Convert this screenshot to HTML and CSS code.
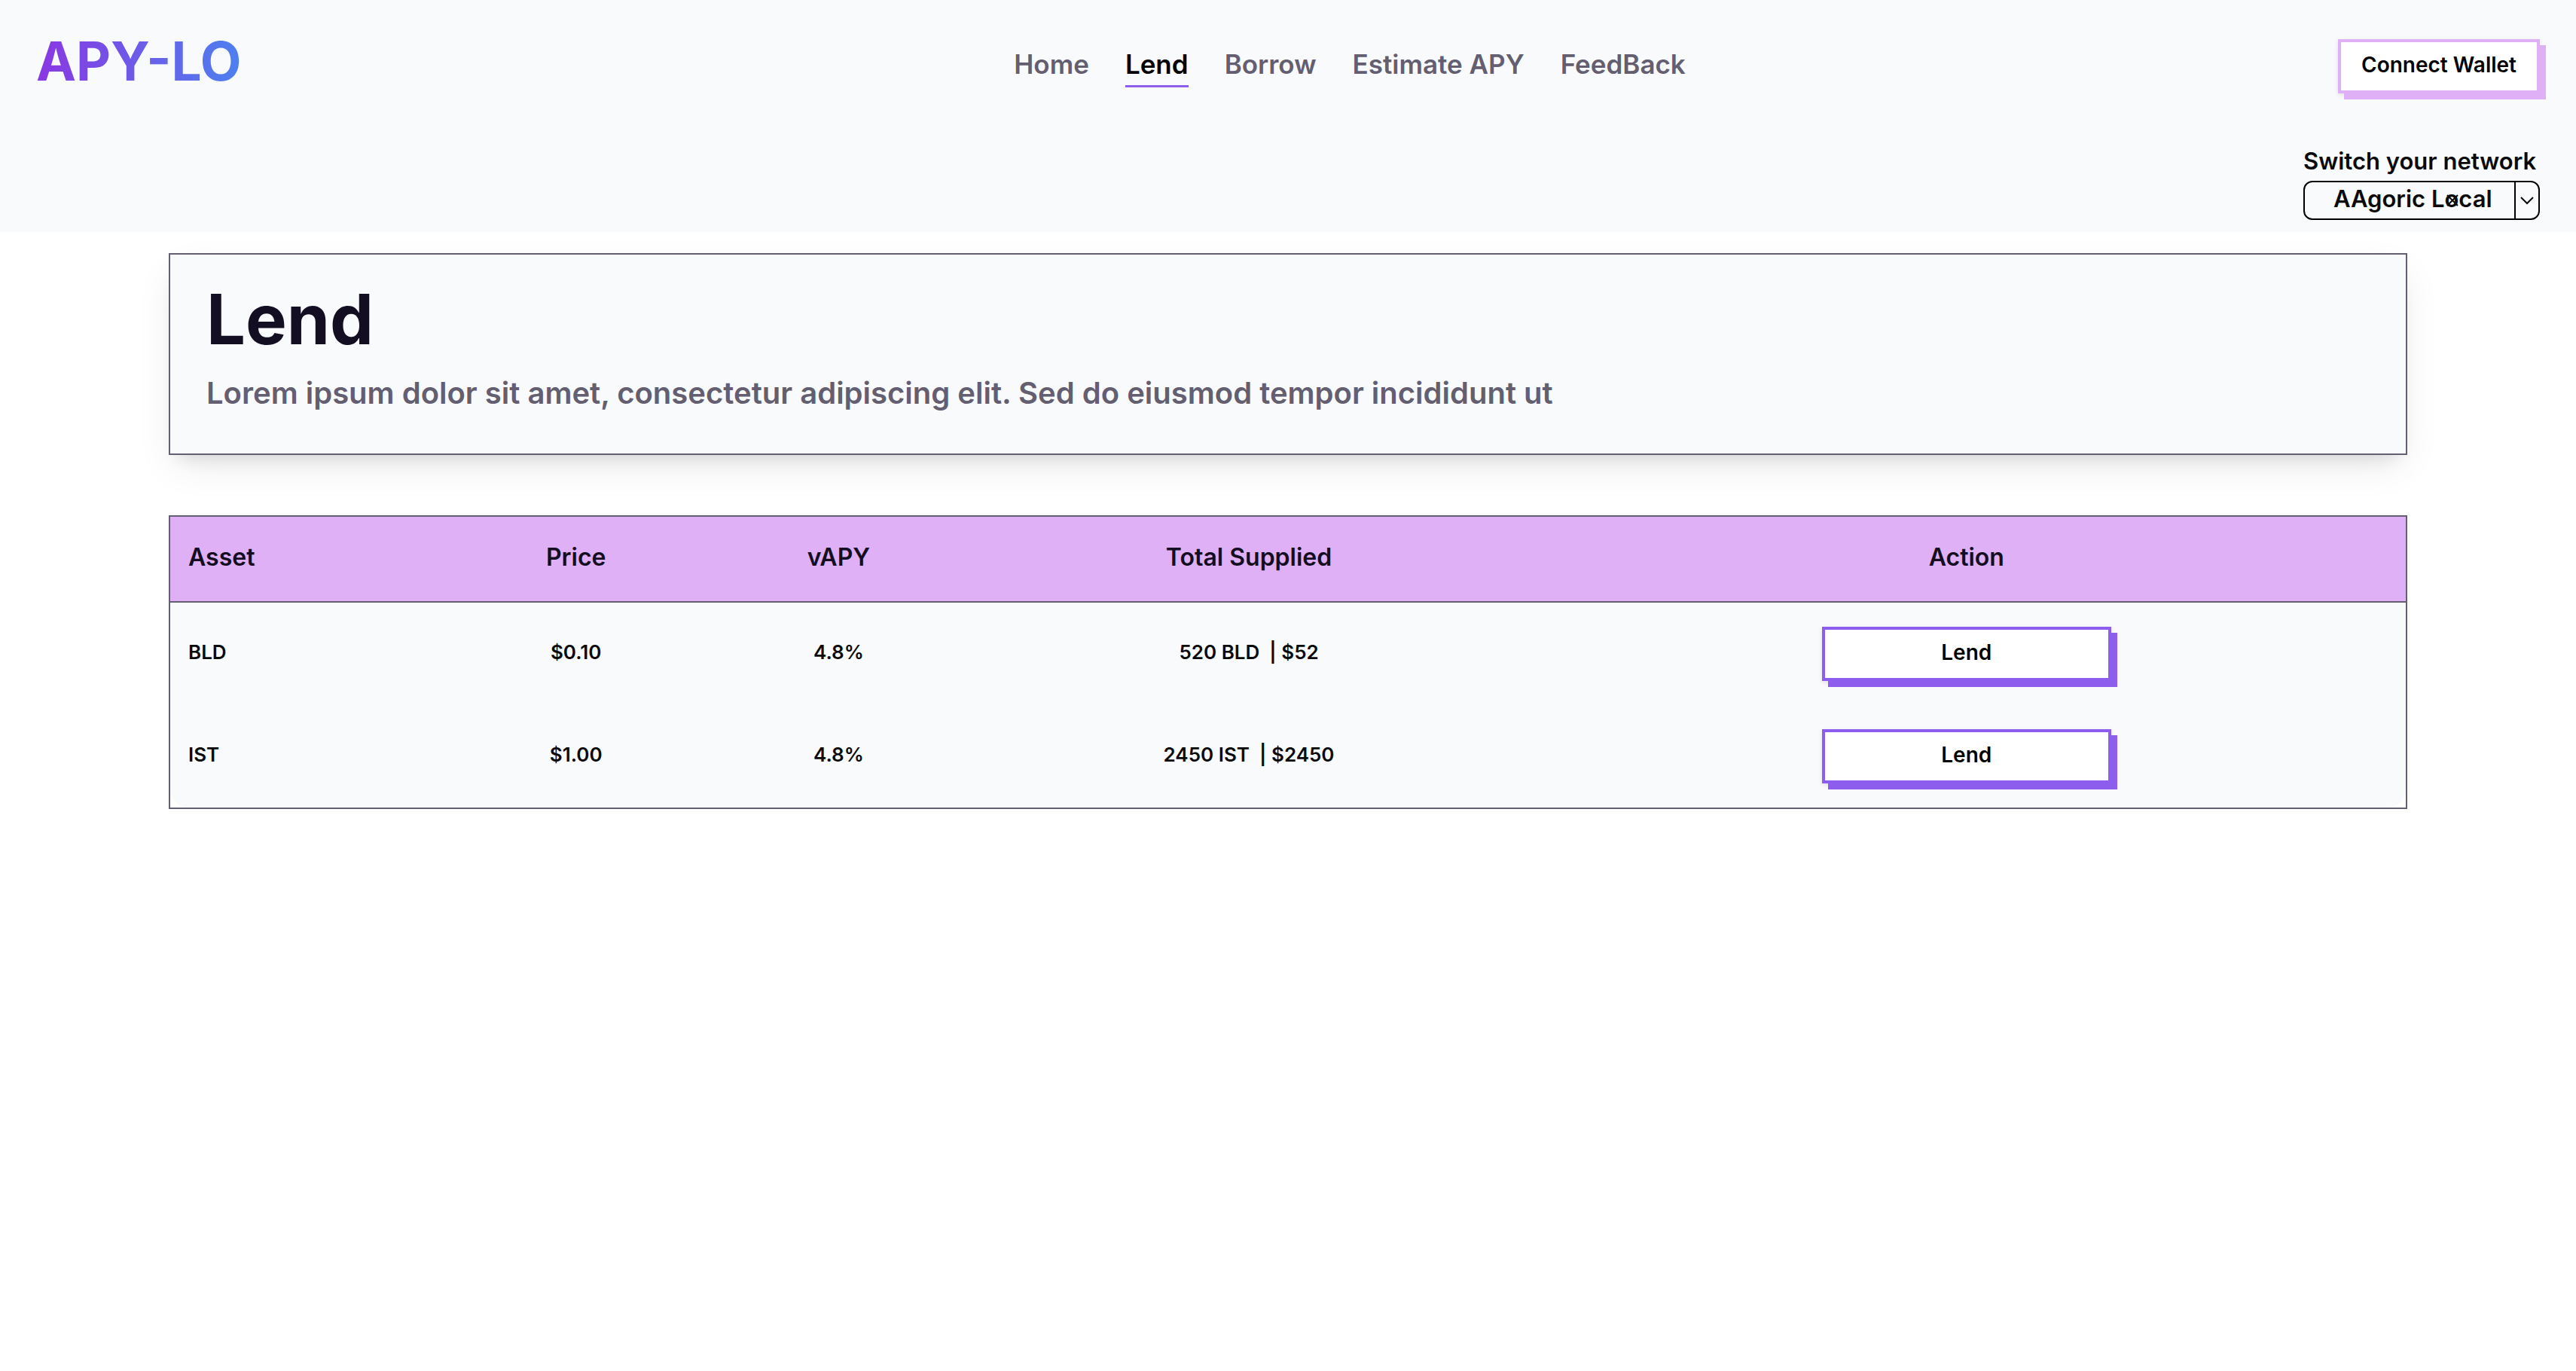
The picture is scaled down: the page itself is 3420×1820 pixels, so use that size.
FILE: index.html
```html
<!DOCTYPE html>
<html lang="en">
<head>
<meta charset="utf-8">
<title>APY-LO | Lend</title>
<link rel="stylesheet" href="styles.css">
</head>
<body>
<header class="header">
  <div class="topbar">
    <div class="brand"><a class="logo" href="#">APY-LO</a></div>
    <nav class="nav">
      <a class="nav-link" href="#">Home</a>
      <a class="nav-link nav-link-active" href="#">Lend</a>
      <a class="nav-link" href="#">Borrow</a>
      <a class="nav-link" href="#">Estimate APY</a>
      <a class="nav-link" href="#">FeedBack</a>
    </nav>
    <button class="button button-wallet" type="button">Connect Wallet</button>
  </div>
  <div class="network">
    <label class="network-label" for="network">Switch your network</label>
    <div class="network-box">
      <select class="network-select" id="network">
        <option>AAgoric Local</option>
      </select>
      <span class="network-arrow">
        <svg width="20" height="12" viewBox="0 0 20 12" fill="none" stroke="currentColor" stroke-width="2"><path d="M2 2l8 8 8-8"/></svg>
      </span>
      <svg class="network-clear" width="16" height="16" viewBox="0 0 16 16" fill="none" stroke="currentColor" stroke-width="2"><path d="M1 1l14 14M15 1L1 15"/></svg>
    </div>
  </div>
</header>
<main class="main">
  <section class="hero">
    <h1 class="hero-title">Lend</h1>
    <p class="hero-text">Lorem ipsum dolor sit amet, consectetur adipiscing elit. Sed do eiusmod tempor incididunt ut</p>
  </section>
  <table class="assets">
    <colgroup>
      <col class="col-asset"><col class="col-price"><col class="col-apy"><col class="col-total"><col class="col-action">
    </colgroup>
    <thead>
      <tr><th>Asset</th><th>Price</th><th>vAPY</th><th>Total Supplied</th><th>Action</th></tr>
    </thead>
    <tbody>
      <tr><td>BLD</td><td>$0.10</td><td>4.8%</td><td>520 BLD &nbsp;| $52</td><td><button class="button button-lend" type="button">Lend</button></td></tr>
      <tr><td>IST</td><td>$1.00</td><td>4.8%</td><td>2450 IST &nbsp;| $2450</td><td><button class="button button-lend" type="button">Lend</button></td></tr>
    </tbody>
  </table>
</main>
</body>
</html>
```
FILE: styles.css
```css
:root {
  --surface: #f9fafc;
  --ink: #0a0a0a;
  --heading: #130e22;
  --muted: #635e70;
  --lilac: #dfb0f6;
  --violet: #8d5eed;
}

* {
  box-sizing: border-box;
}

body {
  margin: 0;
  background: #fff;
  color: var(--ink);
  font-family: Inter, "Liberation Sans", sans-serif;
  font-weight: 600;
}

.header {
  padding: 32px 48px 16px;
  background: var(--surface);
}

.topbar {
  display: flex;
  justify-content: space-between;
  align-items: center;
  height: 112px;
}

.brand {
  width: 432px;
  padding-bottom: 14px;
}

.logo {
  display: inline-block;
  font-size: 71px;
  font-weight: 700;
  line-height: 96px;
  text-decoration: none;
  color: transparent;
  background: linear-gradient(to right, #8b37e2, #4d80ef);
  background-clip: text;
  -webkit-background-clip: text;
}

.nav {
  display: flex;
  gap: 48px;
}

.nav-link {
  padding-bottom: 4px;
  border-bottom: 3px solid transparent;
  font-size: 35px;
  line-height: 48px;
  color: var(--muted);
  text-decoration: none;
}

.nav-link-active {
  color: #000;
  border-color: var(--violet);
}

.button {
  height: 72px;
  border: 4px solid;
  border-radius: 0;
  background: #fff;
  font: inherit;
  font-size: 28px;
  line-height: 40px;
}

.button-wallet {
  padding: 0 27px 4px;
  border-color: var(--lilac);
  color: #000;
  box-shadow: 8px 8px var(--lilac), 0 2px 6px rgba(0, 0, 0, 0.1);
}

.button-lend {
  display: block;
  width: 384px;
  margin: 0 auto;
  padding: 0 0 4px;
  border-color: var(--violet);
  color: #000;
  box-shadow: 8px 8px var(--violet), 0 2px 6px rgba(0, 0, 0, 0.1);
}

.network {
  display: grid;
  grid-template-columns: minmax(314px, auto);
  justify-content: end;
  margin-top: 50px;
  row-gap: 6px;
}

.network-label {
  font-size: 31px;
  line-height: 40px;
}

.network-box {
  position: relative;
  display: flex;
  height: 52px;
  border: 2px solid #000;
  border-radius: 12px;
}

.network-select {
  flex: 1;
  min-width: 0;
  appearance: none;
  padding: 0 0 6px 38px;
  border: 0;
  background: none;
  color: inherit;
  font: inherit;
  font-size: 31px;
}

.network-arrow {
  display: flex;
  align-items: center;
  justify-content: center;
  width: 32px;
  border-left: 2px solid #000;
}

.network-clear {
  position: absolute;
  right: 106px;
  top: 16px;
}

.main {
  padding: 28px 224px;
}

.hero {
  height: 268px;
  padding: 38px 48px;
  border: 2px solid var(--muted);
  background: var(--surface);
  box-shadow: 0 20px 50px -10px rgba(0, 0, 0, 0.1), 0 16px 20px -12px rgba(0, 0, 0, 0.1);
}

.hero-title {
  margin: 0;
  color: var(--heading);
  font-size: 92px;
  font-weight: 700;
  line-height: 96px;
}

.hero-text {
  margin: 22px 0 0;
  color: var(--muted);
  font-size: 40px;
  line-height: 56px;
}

.assets {
  width: 100%;
  margin-top: 80px;
  table-layout: fixed;
  border: 2px solid var(--muted);
  border-collapse: separate;
  border-spacing: 0;
  font-size: 26px;
  text-align: center;
}

.col-asset { width: 12.3%; }
.col-price { width: 11.7%; }
.col-apy { width: 11.8%; }
.col-total { width: 24.9%; }
.col-action { width: 39.3%; }

.assets th {
  height: 114px;
  padding: 0 0 6px;
  border-bottom: 2px solid var(--muted);
  background: var(--lilac);
  color: var(--heading);
  font-size: 32px;
  font-weight: 600;
}

.assets td {
  height: 136px;
  padding: 0 0 6px;
  background: var(--surface);
}

.assets th:first-child,
.assets td:first-child {
  padding-left: 24px;
  text-align: left;
}

.assets td:last-child {
  padding: 0;
}

.assets tr:last-child td:first-child {
  border-bottom-left-radius: 24px;
}

.assets tr:last-child td:last-child {
  border-bottom-right-radius: 24px;
}
```
